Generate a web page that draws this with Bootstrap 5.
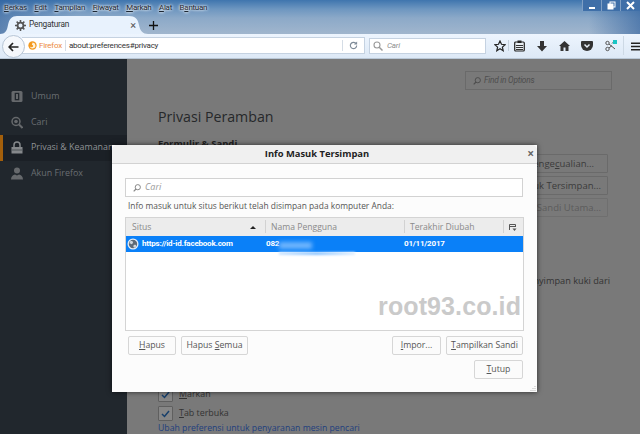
<!DOCTYPE html>
<html lang="id">
<head>
  <meta charset="UTF-8">
  <meta name="viewport" content="width=device-width, initial-scale=1.0">
  <title>Pengaturan</title>
  <link href="https://cdn.jsdelivr.net/npm/bootstrap@5.3.0/dist/css/bootstrap.min.css" rel="stylesheet">
  <style>
    html, body { margin: 0; background: #797979; }
    body { font-family: "Open Sans", "Liberation Sans", sans-serif; font-size: 8.5px; line-height: 1.2; }
    u { text-underline-offset: 1px; text-decoration-thickness: 1px; }

    .win { width: 640px; height: 434px; overflow: hidden; position: relative; }

    /* title bar */
    .chrome-top {
      height: 34px;
      background:
        linear-gradient(90deg, rgba(42,92,155,.55) 0, rgba(42,92,155,0) 12%, rgba(42,92,155,0) 92%, rgba(42,92,155,.6) 100%),
        linear-gradient(180deg, #3f75ae 0, #6d96c0 9px, #8ca9c8 18px, #9fb5cd 33px);
      position: relative;
    }
    .chrome-txt { font-family: Roboto, "Liberation Sans", sans-serif; font-size: 8.3px; letter-spacing: -.22px; }
    .menu-bar { height: 16px; padding-left: 4px; color: #1c2733; text-shadow: 0 0 3px #fff, 0 0 3px #fff; align-items: center; gap: 7.6px; font-size: 8px; letter-spacing: -.28px; }
    .win-btns { position: absolute; top: 0; right: 0; height: 11px; }
    .win-btn { width: 19px; height: 11px; background: #3f6fa8; border-left: 1px solid #7f9fc4; display: flex; align-items: center; justify-content: center; }
    .tab-strip { height: 18px; }
    .tab-shape {
      width: 148px; height: 18px; background: #e8f2fd;
      clip-path: path('M0 18 C5 18 7 15 8 9 C9 3 12 0 17 0 L129 0 C135 0 138 3 139 9 C140 15 143 18 148 18 Z');
      padding: 0 12px 0 15px; color: #333;
    }
    .tab-close { color: #555; font-size: 11px; line-height: 1; }
    .new-tab { width: 14px; margin-left: -2px; }

    /* navigation bar */
    .nav-strip { height: 25px; background: linear-gradient(180deg, #edf5fe 0, #dde9f6 100%); border-bottom: 1px solid #b9c7d6; position: relative; font-size: 8px; }
    .back-circle { width: 23px; height: 23px; border-radius: 50%; background: #f5f8fc; border: 1px solid #b6c5d6; position: absolute; left: 2px; top: 1px; display: flex; align-items: center; justify-content: center; }
    .url-field { position: absolute; left: 22px; top: 3px; width: 343px; height: 17px; background: #fff; border: 1px solid #c5d2e1; border-left: 0; color: #333; }
    .ff-word { color: #ec8a3c; margin-left: 2px; }
    .url-sep { width: 1px; height: 11px; background: #d5dde6; }
    .url-sep.near { margin: 0 3px; }
    .web-search { position: absolute; left: 369px; top: 4px; width: 117px; height: 16px; background: #fff; border: 1px solid #c5d2e1; color: #8f8f8f; font-style: italic; }
    .tool { position: absolute; top: 4px; height: 16px; display: flex; align-items: center; justify-content: center; }

    /* page below the dialog */
    .prefs { height: 375px; background: #797979; }
    .side { width: 127px; background: #21272d; padding-top: 25px; color: #6a6e72; font-size: 8.9px; flex: none; }
    .side-item { height: 25.5px; padding-left: 8px; gap: 8px; align-items: center; border-left: 3px solid transparent; }
    .side-item.on { background: #1b2026; border-left-color: #a35f0b; color: #8f9295; white-space: nowrap; }
    .side-ico { width: 12px; height: 13px; flex: none; }
    .main-pane { padding-left: 31px; color: #2d2d2d; flex-grow: 1; position: relative; }
    .find-row { padding: 12px 28px 0 0; height: 32px; }
    .find-box { width: 147px; height: 19px; border: 1px solid #6a6a6a; color: #4e4e4e; font-style: italic; padding-left: 7px; gap: 3px; }
    .pane-title { font-size: 14.2px; font-weight: 400; margin: 17px 0 0; color: #26282a; }
    .pane-sub { font-size: 9.5px; font-weight: 700; margin: 13px 0 0; color: #222; line-height: 12px; }
    .pane-btns { width: 200px; margin: 4px 0 0 250px; gap: 3px; align-items: flex-end; }
    .ghost-btn { width: 150px; height: 19px; border: 1px solid #6a6a6a; border-radius: 1px; color: #3b3b3b; font-size: 9.5px; padding: 0 6px; white-space: nowrap; display: flex; align-items: center; justify-content: flex-end; }
    .ghost-btn.pad-more { padding-right: 13px; }
    .ghost-btn.off { color: #5c5c5c; border-color: #6f6f6f; }
    .kuki { position: absolute; top: 216px; right: 30px; color: #333; font-size: 9.2px; white-space: nowrap; }
    .low-checks { position: absolute; left: 31px; top: 326px; font-size: 8.9px; color: #333; }
    .chk-line { height: 19px; gap: 6px; align-items: center; }
    .chk-box { width: 15px; height: 15px; border: 1px solid #5f5f5f; border-radius: 1px; background: #868686; display: flex; align-items: center; justify-content: center; }
    .pref-link { color: #1f3f7e; font-size: 8.7px; line-height: 11px; margin-top: 0; white-space: nowrap; }

    /* dialog */
    .login-dlg { position: absolute; left: 112px; top: 145px; width: 425px; height: 247px; background: #fcfcfc; border: 0; border-radius: 0; box-shadow: 0 0 5px rgba(0,0,0,.65); color: #555; }
    .dlg-head { height: 19px; background: #f0f0f0; border-bottom: 1px solid #d2d2d2; font-weight: 700; font-size: 9.4px; color: #222; position: relative; padding: 0 15px 0 0; }
    .dlg-x { position: absolute; right: 3px; top: 2px; font-size: 12px; color: #666; line-height: 14px; font-weight: 700; }
    .dlg-body { padding: 14px 13px 0 13px; position: relative; flex-grow: 1; }
    .dlg-search { height: 19px; width: 398px; border: 1px solid #d2d2d2; background: #fff; color: #999; font-style: italic; padding-left: 7px; gap: 4px; font-size: 9px; }
    .dlg-note { margin: 3px 0 0 3px; line-height: 12px; height: 17px; font-size: 8.4px; color: #555; white-space: nowrap; }
    .login-wrap { width: 399px; height: 114px; border: 1px solid #d4d4d4; background: #fff; position: relative; overflow: hidden; }
    .login-tbl { table-layout: fixed; width: 100%; margin: 0; font-size: 8.6px; border-collapse: collapse; }
    .login-tbl th { background: #ececec; height: 18px; padding: 0 6px; font-weight: 400; color: #8a8a8a; border: 0; position: relative; vertical-align: middle; white-space: nowrap; }
    .login-tbl th + th::before { content: ""; position: absolute; left: 0; top: 2px; bottom: 3px; width: 1px; background: #d2d2d2; }
    .login-tbl td { background: #0a80f8; height: 16px; padding: 0; color: #fff; font-family: Roboto, "Liberation Sans", sans-serif; font-weight: 700; font-size: 8px; letter-spacing: -.2px; border: 0; vertical-align: middle; white-space: nowrap; }
    .sort-up { position: absolute; right: 9px; top: 8px; width: 0; height: 0; border: 3px solid transparent; border-top: 0; border-bottom: 3px solid #222; }
    .smear-a { position: absolute; left: 153px; top: 24px; width: 33px; height: 7px; background: #6fb5fd; filter: blur(2px); }
    .smear-b { position: absolute; left: 153px; top: 34px; width: 76px; height: 2.5px; background: linear-gradient(90deg, #cfe6ff, #8ec5ff 50%, #e4f1ff); filter: blur(.8px); }
    .mark-wm { position: absolute; right: 2px; top: 74px; font-family: "Liberation Sans", Arial, sans-serif; font-weight: 700; font-size: 25px; color: #cacaca; line-height: 28px; letter-spacing: .1px; }
    .dlg-btns { margin-top: 5px; padding: 0 0 0 3px; width: 398px; gap: 5px; }
    .plain-btn { height: 19px; padding: 0; font-size: 8.7px; color: #555; background: #fbfbfb; border: 1px solid #d6d6d6; border-radius: 2px; line-height: 1; }
    .w47 { width: 48px; } .w67 { width: 67px; } .w49 { width: 49px; } .w77 { width: 77px; }
    .tutup-row { margin-top: 5px; width: 398px; }
    .grip { position: absolute; right: 1px; bottom: 1px; }
  </style>
</head>
<body>
<div class="win">

  <div class="chrome-top">
    <div class="chrome-txt menu-bar d-flex">
      <span><u>B</u>erkas</span><span><u>E</u>dit</span><span><u>T</u>ampilan</span><span><u>R</u>iwayat</span><span><u>M</u>arkah</span><span><u>A</u>lat</span><span>B<u>a</u>ntuan</span>
    </div>
    <div class="win-btns d-flex">
      <div class="win-btn"><svg width="8" height="8"><rect x="1" y="5" width="6" height="2" fill="#fff"/></svg></div>
      <div class="win-btn"><svg width="9" height="9"><rect x="3" y="1" width="5" height="5" fill="none" stroke="#fff"/><rect x="1" y="3" width="5" height="5" fill="#fff" stroke="#fff"/></svg></div>
      <div class="win-btn" style="width:20px"><svg width="9" height="9"><path d="M1 1l7 7M8 1l-7 7" stroke="#fff" stroke-width="2"/></svg></div>
    </div>
    <div class="tab-strip d-flex align-items-center">
      <div class="tab-shape chrome-txt d-flex align-items-center">
        <svg width="11" height="11" viewBox="0 0 12 12" class="flex-none"><circle cx="6" cy="6" r="3.2" fill="none" stroke="#555" stroke-width="2"/><path d="M6 0v2.5M6 9.500V12M0 6h2.500M9.500 6H12M1.800 1.800l1.800 1.800M8.400 8.400l1.800 1.800M10.200 1.800L8.400 3.600M3.600 8.400l-1.800 1.800" stroke="#555" stroke-width="1.700"/></svg>
        <span style="margin-left:3px">Pengaturan</span>
        <span class="tab-close ms-auto">×</span>
      </div>
      <div class="new-tab d-flex align-items-center justify-content-center">
        <svg width="9" height="9"><path d="M4.500 0v9M0 4.500h9" stroke="#111" stroke-width="1.300"/></svg>
      </div>
    </div>
  </div>

  <div class="chrome-txt nav-strip">
    <div class="url-field d-flex align-items-center">
      <svg width="9" height="9" viewBox="0 0 10 10" style="margin-left:6px"><circle cx="5" cy="5" r="4.600" fill="#f39a1f"/><path d="M5 1.800a3.200 3.200 0 1 1-3 4.200c1 1 3 1.200 3.600 0 .4-1-.6-1.600-1.400-1.400.2-1 .8-2 .8-2.800z" fill="#fff3dc"/></svg>
      <span class="ff-word">Firefox</span>
      <span class="url-sep near"></span>
      <span>about:preferences#privacy</span>
      <span class="url-sep ms-auto"></span>
      <svg width="9" height="9" viewBox="0 0 10 10" style="margin:0 6px 0 6px"><path d="M8.500 5a3.500 3.500 0 1 1-1-2.500" fill="none" stroke="#7f8b98" stroke-width="1.300"/><path d="M9 .5v3.500H5.500z" fill="#7f8b98"/></svg>
    </div>
    <div class="back-circle"><svg width="11" height="10" viewBox="0 0 11 10"><path d="M5 1L1.200 5 5 9M1.500 5H10.500" fill="none" stroke="#222" stroke-width="1.700"/></svg></div>
    <div class="web-search d-flex align-items-center">
      <svg width="10" height="10" viewBox="0 0 10 10" style="margin:0 4px 0 3px"><circle cx="4" cy="4" r="3" fill="none" stroke="#9a9a9a" stroke-width="1.100"/><path d="M6 6l3.500 3.500" stroke="#9a9a9a" stroke-width="1.500"/></svg>
      <span>Cari</span>
    </div>
    <div class="tool" style="left:493px;width:13px"><svg width="12" height="12" viewBox="0 0 12 12"><path d="M6 1l1.500 3.300 3.600.4-2.700 2.400.8 3.600L6 8.800 2.800 10.700l.8-3.600L.900 4.700l3.600-.4z" fill="none" stroke="#222" stroke-width="1.200"/></svg></div>
    <div class="tool" style="left:508px;width:1px;top:6px;height:11px;background:#c4d0dd"></div>
    <div class="tool" style="left:513px;width:13px"><svg width="11" height="12" viewBox="0 0 11 12"><rect x=".7" y="2" width="9.600" height="9" rx="1" fill="#e8eef4" stroke="#222" stroke-width="1.200"/><rect x="3.500" y=".5" width="4" height="2.500" fill="#222"/><path d="M2 5.500h7M2 7.500h7M2 9.500h7" stroke="#333"/></svg></div>
    <div class="tool" style="left:535px;width:13px"><svg width="10" height="11" viewBox="0 0 10 11"><path d="M3 0h4v5h3L5 10.500 0 5h3z" fill="#333"/></svg></div>
    <div class="tool" style="left:558px;width:13px"><svg width="11" height="10" viewBox="0 0 11 10"><path d="M5.500 0L0 5h1.500v5h3V6.500h2V10h3V5H11z" fill="#333"/></svg></div>
    <div class="tool" style="left:580px;width:14px"><svg width="12" height="10" viewBox="0 0 12 10"><path d="M1 0h10a1 1 0 0 1 1 1v3a6 6 0 0 1-12 0V1a1 1 0 0 1 1-1z" fill="#333"/><path d="M3.500 3.500L6 6l2.500-2.500" fill="none" stroke="#e8f0f8" stroke-width="1.500"/></svg></div>
    <div class="tool" style="left:604px;width:13px"><svg width="12" height="12" viewBox="0 0 12 12"><circle cx="2.500" cy="3" r="1.700" fill="none" stroke="#555"/><circle cx="2.500" cy="9" r="1.700" fill="none" stroke="#555"/><path d="M4 4l6 5M4 8l3-2.500M9 1.500l-2 2" stroke="#555"/><rect x="8" y="0" width="4" height="4" fill="#19c5c5"/></svg></div>
    <div class="tool" style="left:623px;width:1px;top:2px;height:19px;background:#cdd9e5"></div>
    <div class="tool" style="left:631px;width:9px;justify-content:flex-start"><svg width="9" height="9" viewBox="0 0 9 9"><path d="M0 1.200h9M0 4.500h9M0 7.800h9" stroke="#222" stroke-width="1.500"/></svg></div>
  </div>

  <div class="prefs d-flex">
    <div class="side">
      <div class="side-item d-flex"><svg class="side-ico" viewBox="0 0 12 13"><rect x=".5" y="1" width="11" height="11" rx="1.500" fill="#66696c"/><rect x="3.700" y="2.800" width="4.600" height="7.500" fill="#21272d"/><rect x="5" y="4" width="2" height="5" fill="#66696c"/></svg><span>Umum</span></div>
      <div class="side-item d-flex"><svg class="side-ico" viewBox="0 0 12 13"><circle cx="5" cy="5.500" r="4" fill="none" stroke="#66696c" stroke-width="1.500"/><circle cx="5" cy="5.500" r="1.800" fill="#66696c"/><path d="M8 8.500l3.500 3.500" stroke="#66696c" stroke-width="2"/></svg><span>Cari</span></div>
      <div class="side-item on d-flex"><svg class="side-ico" viewBox="0 0 12 13"><path d="M3 6V4a3 3 0 0 1 6 0v2" fill="none" stroke="#85888b" stroke-width="1.500"/><rect x=".5" y="6" width="11" height="6.500" fill="#85888b"/><path d="M1.500 9h9" stroke="#1b2026" stroke-dasharray="1 1"/></svg><span>Privasi &amp; Keamanan</span></div>
      <div class="side-item d-flex"><svg class="side-ico" viewBox="0 0 12 13"><circle cx="6" cy="3.500" r="3" fill="#66696c"/><path d="M0 12.500c0-3 2-4.500 4-5l2 1 2-1c2 .5 4 2 4 5z" fill="#66696c"/></svg><span>Akun Firefox</span></div>
    </div>
    <div class="main-pane">
      <div class="find-row d-flex justify-content-end">
        <div class="find-box chrome-txt d-flex align-items-center">
          <svg width="8" height="8" viewBox="0 0 8 8"><circle cx="4.800" cy="3.200" r="2.600" fill="none" stroke="#4e4e4e"/><path d="M3 5L.7 7.300" stroke="#4e4e4e" stroke-width="1.200"/></svg>
          <span>Find in Options</span>
        </div>
      </div>
      <h1 class="pane-title">Privasi Peramban</h1>
      <h2 class="pane-sub">Formulir &amp; Sandi</h2>
      <div class="pane-btns d-flex flex-column">
        <div class="ghost-btn pad-more"><span>Penge<u>c</u>ualian...</span></div>
        <div class="ghost-btn">Info Masuk Tersimpan...</div>
        <div class="ghost-btn off">Sandi Utama...</div>
      </div>
      <div class="kuki">menyimpan kuki dari</div>
      <div class="low-checks">
        <div class="chk-line d-flex"><span class="chk-box"><svg width="9" height="8"><path d="M1 4l2.500 2.500L8 1" fill="none" stroke="#173f6b" stroke-width="1.500"/></svg></span><span><u>M</u>arkah</span></div>
        <div class="chk-line d-flex"><span class="chk-box"><svg width="9" height="8"><path d="M1 4l2.500 2.500L8 1" fill="none" stroke="#173f6b" stroke-width="1.500"/></svg></span><span><u>T</u>ab terbuka</span></div>
        <div class="pref-link">Ubah preferensi untuk penyaranan mesin pencari</div>
      </div>
    </div>
  </div>

  <div class="card login-dlg">
    <div class="card-header dlg-head d-flex align-items-center justify-content-center">
      <span>Info Masuk Tersimpan</span>
      <span class="dlg-x">×</span>
    </div>
    <div class="dlg-body">
      <div class="dlg-search d-flex align-items-center">
        <svg width="8" height="8" viewBox="0 0 8 8"><circle cx="4.800" cy="3.200" r="2.600" fill="none" stroke="#888"/><path d="M3 5L.7 7.300" stroke="#888" stroke-width="1.200"/></svg>
        <span>Cari</span>
      </div>
      <div class="dlg-note">Info masuk untuk situs berikut telah disimpan pada komputer Anda:</div>
      <div class="login-wrap">
        <table class="table login-tbl">
          <colgroup><col style="width:139px"><col style="width:139px"><col style="width:99px"><col></colgroup>
          <thead>
            <tr><th>Situs<span class="sort-up"></span></th><th>Nama Pengguna</th><th>Terakhir Diubah</th><th class="text-center"><svg width="8" height="8" viewBox="0 0 8 8"><path d="M.5 6V.5h6V3M.5 2.500h6" fill="none" stroke="#555"/><path d="M3.500 4.500h4L5.500 7z" fill="#555"/></svg></th></tr>
          </thead>
          <tbody>
            <tr>
              <td><div class="d-flex align-items-center"><svg width="12" height="12" viewBox="0 0 12 12" style="margin:0 3px 0 1px"><circle cx="6" cy="6" r="5.500" fill="#e8eef6"/><circle cx="6" cy="6" r="4.200" fill="#5f6a76"/><path d="M3 3.500c2-1 3 0 3 1s-1 2-2 1.500-2 0-1-2.500zM7 7c1.500-.5 2.500 0 2 1.500s-2 1.500-2.500.5.200-1.800.5-2z" fill="#cfd6dd"/></svg>https://id-id.facebook.com</div></td>
              <td style="padding-left:1px">082</td>
              <td style="padding-left:0">01/11/2017</td>
              <td></td>
            </tr>
          </tbody>
        </table>
        <div class="smear-a"></div>
        <div class="smear-b"></div>
        <div class="mark-wm">root93.co.id</div>
      </div>
      <div class="dlg-btns d-flex">
        <button type="button" class="btn plain-btn w47"><u>H</u>apus</button>
        <button type="button" class="btn plain-btn w67">Hapus <u>S</u>emua</button>
        <button type="button" class="btn plain-btn w49 ms-auto"><u>I</u>mpor...</button>
        <button type="button" class="btn plain-btn w77"><u>T</u>ampilkan Sandi</button>
      </div>
      <div class="tutup-row d-flex justify-content-end">
        <button type="button" class="btn plain-btn w49"><u>T</u>utup</button>
      </div>
    </div>
    <svg class="grip" width="6" height="6"><path d="M5 1v1M3 3v1M5 3v1M1 5v1M3 5v1M5 5v1" stroke="#bbb"/></svg>
  </div>

</div>
<script src="https://cdn.jsdelivr.net/npm/bootstrap@5.3.0/dist/js/bootstrap.bundle.min.js"></script>
</body>
</html>
